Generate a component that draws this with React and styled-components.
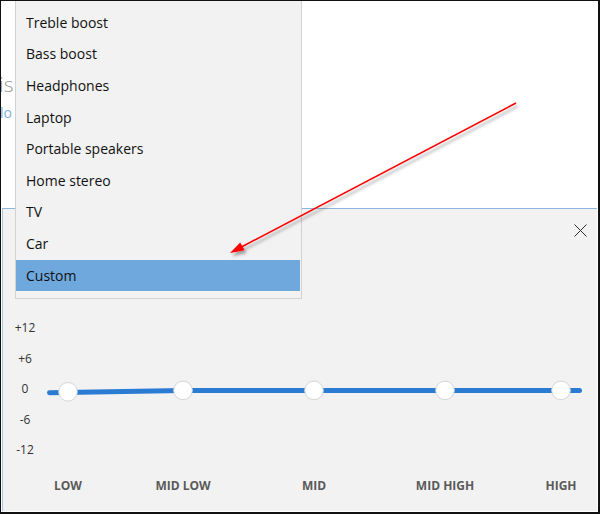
import React from "react";
import styled, { createGlobalStyle } from "styled-components";

const Global = createGlobalStyle`
  html, body { margin: 0; padding: 0; background: #ffffff; }
  body { font-family: "Open Sans", "Noto Sans", sans-serif; }
`;

const Frame = styled.div`
  position: relative;
  width: 600px;
  height: 514px;
  overflow: hidden;
  background: #ffffff;
  display: flex;
  flex-direction: column;
  &::after {
    content: "";
    position: absolute;
    inset: 0;
    border-style: solid;
    border-color: #111;
    border-width: 1px 2px 2px 1px;
    pointer-events: none;
    z-index: 10;
  }
`;

const TopArea = styled.div`
  height: 208px;
  flex: none;
  padding: 71px 0 0 0;
  box-sizing: border-box;
  display: flex;
  flex-direction: column;
  gap: 6px;
`;

const PageTitle = styled.div`
  font-size: 21px;
  font-weight: 300;
  line-height: 26px;
  color: #9a9a9a;
  margin-left: -1px;
`;

const PageLink = styled.div`
  font-size: 14px;
  line-height: 20px;
  color: #7fb2df;
`;

const Panel = styled.div`
  flex: 1;
  margin: 0 3px 3px 2px;
  background: #f2f2f2;
  border-top: 1px solid #8db6de;
  border-left: 1px solid #a9c6e4;
  display: flex;
  flex-direction: column;
`;

const CloseRow = styled.div`
  display: flex;
  justify-content: flex-end;
  padding: 15px 10px 0 0;
  height: 12px;
`;

const CloseButton = styled.button`
  border: 0;
  background: transparent;
  padding: 0;
  width: 13px;
  height: 13px;
  display: block;
  cursor: pointer;
`;

const ChartRow = styled.div`
  display: grid;
  grid-template-columns: 44px 1fr;
  margin-top: 77px;
`;

const Axis = styled.div`
  display: flex;
  flex-direction: column;
`;

const AxisLabel = styled.div`
  height: 30.5px;
  line-height: 30.5px;
  text-align: center;
  font-size: 12px;
  color: #333;
`;

const Plot = styled.svg`
  display: block;
  width: 549px;
  height: 152.5px;
`;

const BandRow = styled.div`
  display: grid;
  grid-template-columns: 60px 170px 92px 170px 62px;
  margin: 12px 0 0 35px;
`;

const BandLabel = styled.div`
  text-align: center;
  font-size: 12px;
  line-height: 16px;
  font-weight: 700;
  color: #5a5a5a;
  white-space: nowrap;
`;

const Menu = styled.div`
  position: absolute;
  left: 15px;
  top: -2px;
  width: 287px;
  height: 301px;
  box-sizing: border-box;
  border: 1px solid #d2d2d2;
  background: #f2f2f2;
  padding: 8px 1px 0 0;
  display: flex;
  flex-direction: column;
  z-index: 5;
`;

const MenuItem = styled.div`
  height: 31.6px;
  flex: none;
  display: flex;
  align-items: center;
  padding-left: 10px;
  padding-bottom: 1px;
  box-sizing: border-box;
  font-size: 14px;
  color: #111;
  background: ${(p) => (p.$selected ? "#6ea8dc" : "transparent")};
`;

const Annotation = styled.svg`
  position: absolute;
  inset: 0;
  width: 600px;
  height: 514px;
  pointer-events: none;
  z-index: 8;
`;

const presets = [
  "Treble boost",
  "Bass boost",
  "Headphones",
  "Laptop",
  "Portable speakers",
  "Home stereo",
  "TV",
  "Car",
  "Custom",
];

const axis = ["+12", "+6", "0", "-6", "-12"];
const bands = ["LOW", "MID LOW", "MID", "MID HIGH", "HIGH"];
const nodes = [
  { x: 21, y: 78.8 },
  { x: 136, y: 77.4 },
  { x: 267, y: 77.4 },
  { x: 398, y: 77.4 },
  { x: 514, y: 77.4 },
];

export default function App() {
  return (
    <>
      <Global />
      <Frame>
        <TopArea>
          <PageTitle>is</PageTitle>
          <PageLink>lo</PageLink>
        </TopArea>
        <Panel>
          <CloseRow>
            <CloseButton aria-label="Close">
              <svg width="13" height="13" viewBox="0 0 13 13">
                <path d="M0.5 0.5 L12.5 12.5 M12.5 0.5 L0.5 12.5" stroke="#2b2b2b" strokeWidth="1" fill="none" />
              </svg>
            </CloseButton>
          </CloseRow>
          <ChartRow>
            <Axis>
              {axis.map((a) => (
                <AxisLabel key={a}>{a}</AxisLabel>
              ))}
            </Axis>
            <Plot viewBox="0 0 549 152.5">
              <path
                d="M2.5 79.8 L136 77.4 L532.5 77.4"
                stroke="#2a7bd2"
                strokeWidth="5"
                strokeLinecap="round"
                strokeLinejoin="round"
                fill="none"
              />
              {nodes.map((n, i) => (
                <circle key={i} cx={n.x} cy={n.y} r="9.3" fill="#ffffff" stroke="#d6d6d6" strokeWidth="1" />
              ))}
            </Plot>
          </ChartRow>
          <BandRow>
            {bands.map((b) => (
              <BandLabel key={b}>{b}</BandLabel>
            ))}
          </BandRow>
        </Panel>
        <Menu role="listbox">
          {presets.map((p) => (
            <MenuItem key={p} $selected={p === "Custom"}>
              {p}
            </MenuItem>
          ))}
        </Menu>
        <Annotation viewBox="0 0 600 514">
          <defs>
            <filter id="shadow" x="-10%" y="-10%" width="130%" height="140%">
              <feDropShadow dx="2" dy="3" stdDeviation="1.4" floodColor="#000" floodOpacity="0.35" />
            </filter>
          </defs>
          <g filter="url(#shadow)">
            <line x1="516" y1="103" x2="240" y2="247.7" stroke="#ff0000" strokeWidth="1.6" />
            <polygon points="230,253 244.6,250.2 240.2,242.4" fill="#ff0000" />
          </g>
        </Annotation>
      </Frame>
    </>
  );
}
